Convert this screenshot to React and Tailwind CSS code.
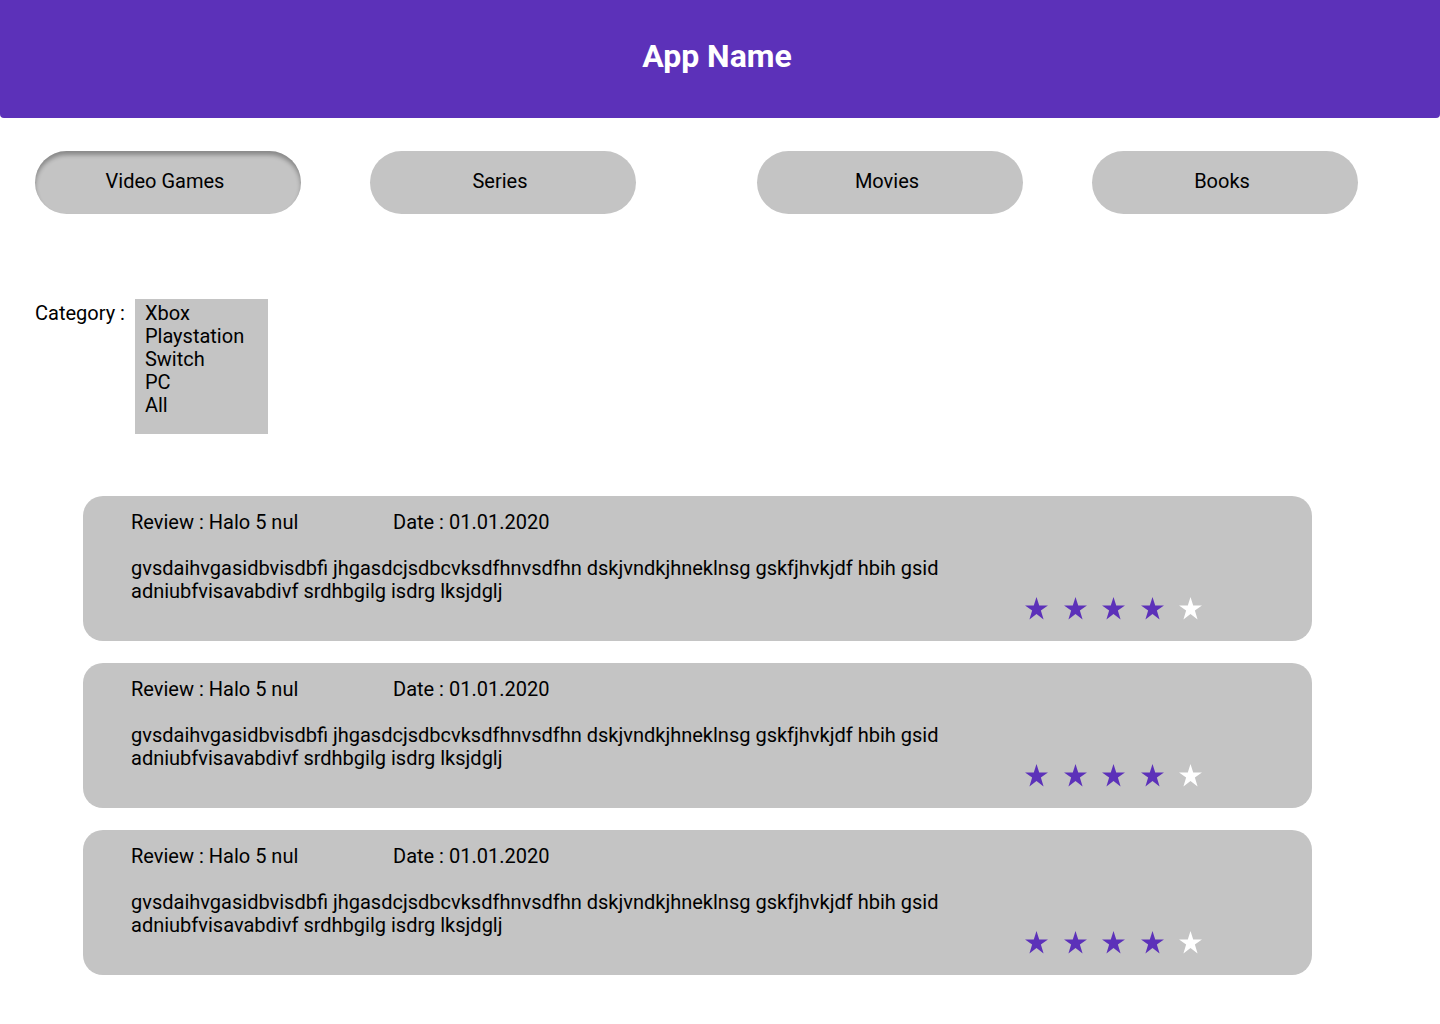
import React from 'react'

const tabs = [
    { label: "Video Games", active: true, cls: "ml-[35px]" },
    { label: "Series", cls: "ml-[69px]" },
    { label: "Movies", cls: "ml-[121px]" },
    { label: "Books", cls: "ml-[69px]" },
]

const categories = ["Xbox", "Playstation", "Switch", "PC", "All"]

const Star = ({ filled }) => (
    <svg width="25" height="25" viewBox="0 0 24 24" className={filled ? "fill-[#5c31b9]" : "fill-white"}>
        <polygon points="12,1 14.6,9 23,9 16.2,14 18.8,22.5 12,17.3 5.2,22.5 7.8,14 1,9 9.4,9" />
    </svg>
)

const ReviewCard = () => (
    <div className="flex justify-between items-end bg-[#c4c4c4] rounded-[20px] h-[145px] pl-[48px] pr-[109px] pt-[15px] pb-[20px]">
        <div className="self-start">
            <div className="flex text-[20px] leading-[23px]">
                <span className="w-[262px]">Review : Halo 5 nul</span>
                <span>Date : 01.01.2020</span>
            </div>
            <p className="mt-[23px] w-[830px] text-[20px] leading-[23px]">
                gvsdaihvgasidbvisdbfi jhgasdcjsdbcvksdfhnvsdfhn dskjvndkjhneklnsg gskfjhvkjdf hbih gsid adniubfvisavabdivf srdhbgilg isdrg lksjdglj
            </p>
        </div>
        <div className="flex items-center gap-[13.5px]">
            <Star filled />
            <Star filled />
            <Star filled />
            <Star filled />
            <Star />
        </div>
    </div>
)

const App = () => {
    return (
        <div className="min-h-[1024px] bg-white text-black font-['Roboto',sans-serif]">
            <header className="h-[118px] bg-[#5c31b9] rounded-b-[4px] flex items-center justify-center pb-[6px] pr-[6px]">
                <h1 className="text-white text-[32px] font-bold">App Name</h1>
            </header>

            <nav className="flex mt-[33px]">
                {tabs.map((t) => (
                    <button
                        key={t.label}
                        className={`${t.cls} w-[266px] h-[63px] rounded-full bg-[#c4c4c4] text-[20px] pr-[6px] pb-[4px] ${t.active ? "shadow-[inset_0_4px_4px_rgba(0,0,0,0.3)]" : ""}`}
                    >
                        {t.label}
                    </button>
                ))}
            </nav>

            <div className="flex items-start mt-[85px] pl-[35px]">
                <span className="text-[20px] leading-[23px] mt-[3px]">Category :</span>
                <ul className="ml-[10px] w-[133px] bg-[#c4c4c4] pl-[10px] pt-[3px] pb-[17px] text-[20px] leading-[23px]">
                    {categories.map((c) => (
                        <li key={c}>{c}</li>
                    ))}
                </ul>
            </div>

            <section className="mt-[62px] ml-[83px] w-[1229px] flex flex-col gap-[22px] pb-[49px]">
                <ReviewCard />
                <ReviewCard />
                <ReviewCard />
            </section>
        </div>
    )
}

export default App
